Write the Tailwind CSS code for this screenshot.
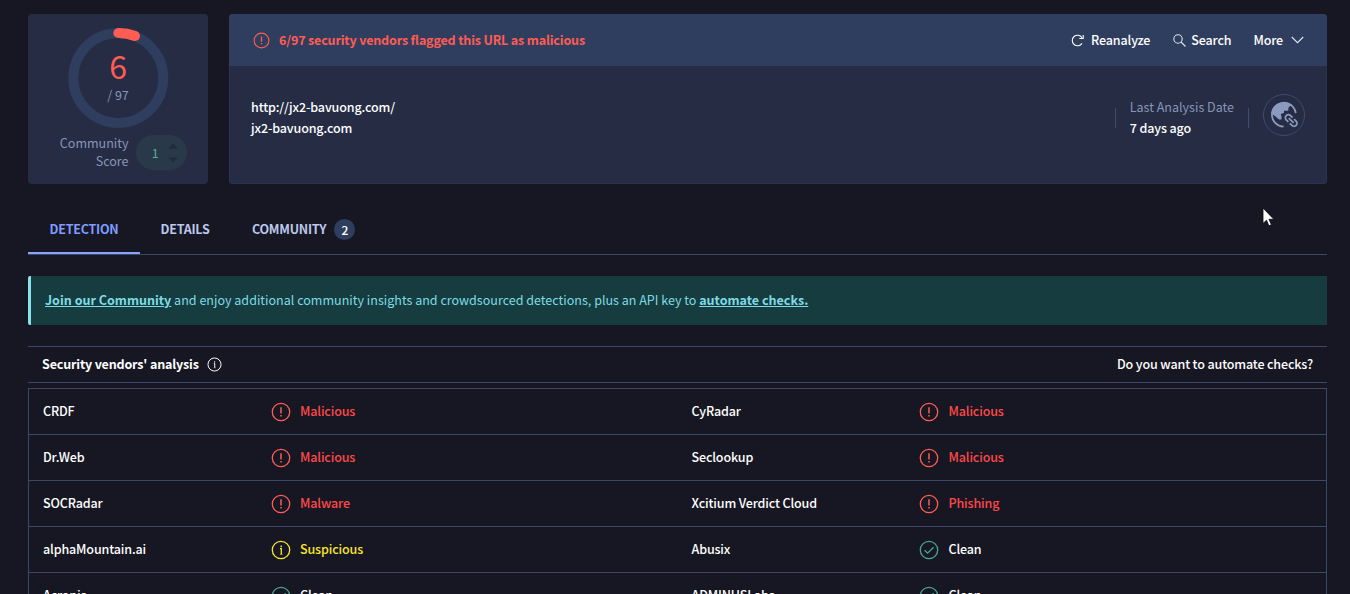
<!DOCTYPE html>
<html lang="en">
<head>
<meta charset="utf-8">
<title>URL report</title>
<script src="https://cdn.jsdelivr.net/npm/@tailwindcss/browser@4"></script>
</head>
<body class="relative h-[594px] overflow-hidden bg-[#171723] pt-[14px] pr-[23px] pl-7 font-['Noto_Sans_CJK_SC','Noto_Sans',sans-serif] text-[12.53px] leading-[21px] font-medium tracking-[-0.14px] text-white">
<svg width="0" height="0" class="absolute">
  <symbol id="alert" viewBox="0 0 20 20"><circle cx="10" cy="10" r="8.7" fill="none" stroke="currentColor" stroke-width="1.3"/><path d="M10 5.3v6.2" stroke="currentColor" stroke-width="1.5" fill="none"/><path d="M10 13v1.5" stroke="currentColor" stroke-width="1.5"/></symbol>
  <symbol id="info" viewBox="0 0 20 20"><circle cx="10" cy="10" r="8.7" fill="none" stroke="currentColor" stroke-width="1.3"/><path d="M9 8.600h1.300v5.400" stroke="currentColor" stroke-width="1.3" fill="none"/><path d="M9 14.300h2.600" stroke="currentColor" stroke-width=".7"/><path d="M10.200 5.600v1.600" stroke="currentColor" stroke-width="1.4"/></symbol>
  <symbol id="check" viewBox="0 0 20 20"><circle cx="10" cy="10" r="8.7" fill="none" stroke="currentColor" stroke-width="1.3"/><path d="M5.6 10.2l3 3 6-6" stroke="currentColor" stroke-width="1.3" fill="none"/></symbol>
</svg>

<header class="flex gap-[21px]">
  <section class="flex h-[170px] w-[180px] flex-col items-center rounded bg-[#252c44] pt-[13px]">
    <div class="relative flex h-[101px] w-[101px] flex-col items-center">
      <svg class="absolute inset-0" width="101" height="101" viewBox="0 0 101 101" fill="none"><circle cx="50.3" cy="51" r="45" stroke="#2f3e5e" stroke-width="10"/><path d="M50.3 6A45 45 0 0 1 67 9" stroke="#ff5c54" stroke-width="10" stroke-linecap="round"/></svg>
      <span class="relative mt-[20px] text-[32px] leading-9 font-normal text-[#ff5c54]">6</span>
      <span class="relative mt-[3px] leading-[18px] font-normal tracking-normal text-[#8796b8]">/ 97</span>
    </div>
    <div class="flex gap-[7px] pt-[6px] pl-[9px]">
      <div class="w-[70px] text-right leading-[18px] font-normal tracking-normal text-[#8796b8]">Community Score</div>
      <div class="mt-[1px] flex h-[35px] w-[51px] items-center justify-end gap-[9px] rounded-full bg-[#29394a] pr-[9px] font-normal text-[#4bb294]">
        <span>1</span>
        <svg width="10" height="20" viewBox="0 0 10 20" fill="#232a40"><path d="M0 5.5L5 .5l5 5zM0 14.500h10L5 19.500z"/></svg>
      </div>
    </div>
  </section>

  <section class="h-[170px] flex-1 overflow-hidden rounded bg-[#252c44] ring-1 ring-[#2a3450] ring-inset">
    <div class="flex h-[52px] items-center bg-[#2f3e5e] pr-[23px] pl-6">
      <svg class="text-[#ff5c54]" width="17" height="17"><use href="#alert"/></svg>
      <span class="ml-[9px] pb-[2px] font-bold tracking-[-0.16px] text-[#ff5c54]">6/97 security vendors flagged this URL as malicious</span>
      <div class="ml-auto flex items-center">
        <svg width="13" height="13" viewBox="0 0 13 13" fill="none" stroke="#fff" stroke-width="1.1"><path d="M11 9.400A5.300 5.300 0 1 1 11 3.600M12.200 1v3.500H8.300"/></svg>
        <span class="ml-[7px] pb-[2px]">Reanalyze</span>
        <svg class="ml-[23px]" width="13" height="13" viewBox="0 0 13 13" fill="none" stroke="#dfe4f0" stroke-width="1.100"><circle cx="5" cy="5" r="4.200"/><path d="M8 8l4.500 4.500"/></svg>
        <span class="ml-[5px] pb-[2px]">Search</span>
        <span class="ml-[22px] pb-[2px]">More</span>
        <svg class="ml-2" width="13" height="8" viewBox="0 0 13 8" fill="none" stroke="#dfe4f0" stroke-width="1.100"><path d="M.8 1l5.700 5.700L12.200 1"/></svg>
      </div>
    </div>
    <div class="flex items-start pt-[28px] pr-[22px] pl-[22px]">
      <div class="pt-[2px]"><div>http://jx2-bavuong.com/</div><div>jx2-bavuong.com</div></div>
      <div class="ml-auto mt-[14px] h-5 w-px bg-[#3d4c70]"></div>
      <div class="ml-[14px] pt-[2px]"><div class="font-normal tracking-normal text-[#8796b8]">Last Analysis Date</div><div>7 days ago</div></div>
      <div class="ml-[14px] mt-[14px] h-5 w-px bg-[#3d4c70]"></div>
      <svg class="ml-[14px]" width="42" height="42" viewBox="0 0 42 42" fill="none"><circle cx="21" cy="21" r="20.500" stroke="#3d4c70"/><path d="M32.800 19.200A12 12 0 1 0 20.600 32.700" stroke="#8b9bc0" stroke-width="1.700"/><path d="M8.300 19.500C9 12.800 14.300 8.200 20.800 8.200c3.800 0 6.800 1.200 8.700 2.800l-2.500 1-1.700 2v2.700h-4.300v2.300l-3.300 1 .8 2.500v3h-2.500l-3.500-3z" fill="#8b9bc0"/><g transform="translate(28.200 26.500) rotate(45)"><path d="M-1 3h-3a3 3 0 0 1 0-6h3M1-3h3a3 3 0 0 1 0 6H1M-3.500 0h7" stroke="#8b9bc0" stroke-width="1.700"/></g></svg>
    </div>
  </section>
</header>

<nav class="mt-[21px] flex h-[50px] border-b border-[#3b4869] font-bold tracking-[-0.25px] text-[#bcc8ea]">
  <div class="flex h-[49px] w-[112px] items-center justify-center border-b-2 border-[#88a3ff] text-[#7f9cff]">DETECTION</div>
  <div class="flex h-[47px] w-[90px] items-center justify-center">DETAILS</div>
  <div class="flex h-[47px] items-center pl-[22px]">COMMUNITY<span class="mt-px ml-[8px] h-[21px] w-[21px] rounded-full bg-[#2f3e5e] text-center text-[12px] font-medium text-white">2</span></div>
</nav>

<p class="mt-[21px] flex h-[49px] items-center rounded-l-[2px] border-l-[3px] border-[#8be1e8] bg-[#163c3f] pb-[2px] pl-[14px] text-[12.54px] font-normal tracking-normal whitespace-pre text-[#7ddbe3]"><a class="font-bold underline">Join our Community</a> and enjoy additional community insights and crowdsourced detections, plus an API key to <a class="font-bold underline">automate checks.</a></p>

<div class="mt-[21px] flex h-[37px] items-center border-y border-[#3b4869] px-[14px]">
  <span class="pb-[2px] font-bold tracking-[-0.17px]">Security vendors' analysis</span>
  <svg class="ml-[8px]" width="15" height="15"><use href="#info"/></svg>
  <span class="ml-auto pb-[2px]">Do you want to automate checks?</span>
</div>

<main class="mt-[5px] border border-[#3b4869]" id="rows"></main>

<svg class="absolute top-[207px] left-[1262px]" width="13" height="20" viewBox="0 0 13 20"><path d="M1 1v15.500l3.500-3.300 2.400 5.600 2.500-1.100L7 12.300h4.800z" fill="#fff" stroke="#08080d" stroke-width=".8"/></svg>

<script>
const kinds = {
  bad: ['#alert', 'text-[#ff5c54]', 'text-[#ff4848]'],
  warn: ['#info', 'text-[#f8e62d]', 'text-[#f8e62d]'],
  ok: ['#check', 'text-[#4ba394]', 'text-white'],
};
const rows = [
  ['CRDF', 'bad', 'Malicious', 'CyRadar', 'bad', 'Malicious'],
  ['Dr.Web', 'bad', 'Malicious', 'Seclookup', 'bad', 'Malicious'],
  ['SOCRadar', 'bad', 'Malware', 'Xcitium Verdict Cloud', 'bad', 'Phishing'],
  ['alphaMountain.ai', 'warn', 'Suspicious', 'Abusix', 'ok', 'Clean'],
  ['Acronis', 'ok', 'Clean', 'ADMINUSLabs', 'ok', 'Clean'],
];
const cell = (name, kind, verdict, textPad) => `<div class="flex w-[648px] items-center pl-[14px]"><span class="w-[228px] pb-[2px] ${textPad}">${name}</span><svg class="${kinds[kind][1]}" width="20" height="20"><use href="${kinds[kind][0]}"/></svg><span class="ml-[9px] pb-[2px] ${textPad} ${kinds[kind][2]}">${verdict}</span></div>`;
document.getElementById('rows').innerHTML = rows.map(r => `<div class="flex h-[46px] border-b border-[#3b4869]">${cell(r[0], r[1], r[2], '')}${cell(r[3], r[4], r[5], 'pl-[0.5px]')}</div>`).join('');
</script>
</body>
</html>
